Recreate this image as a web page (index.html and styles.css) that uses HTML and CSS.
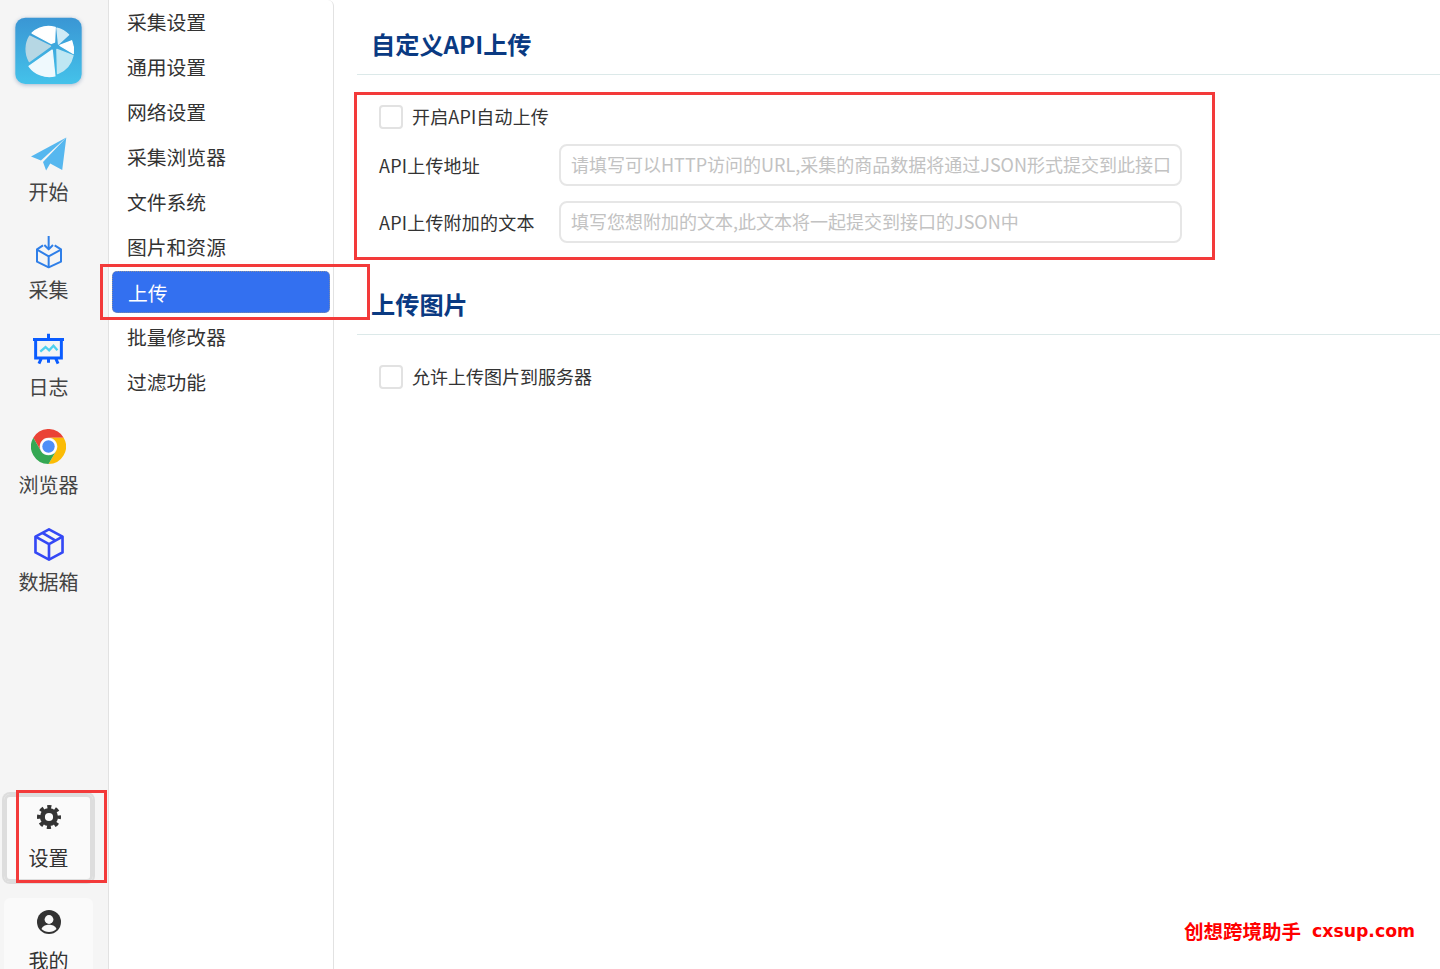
FILE: index.html
```html
<!DOCTYPE html>
<html lang="zh-CN">
<head>
<meta charset="utf-8">
<title>上传设置</title>
<link rel="stylesheet" href="styles.css">
</head>
<body>
<div class="app">
  <aside class="rail">
    <svg class="logo" viewBox="45 50 200 200" aria-hidden="true">
      <defs><linearGradient id="lg" x1="0" y1="0" x2="0" y2="1"><stop offset="0" stop-color="#3a96d4"/><stop offset="1" stop-color="#44c2ea"/></linearGradient></defs>
      <rect x="46" y="52" width="198" height="198" rx="30" fill="url(#lg)"/>
      <g stroke-width="4" stroke-linejoin="round">
        <path d="M151 137 89 107A75 75 0 0 0 88 183Z" fill="#b6d7e4" stroke="#b6d7e4"/>
        <path d="M96 98A75 75 0 0 1 165 81L163 125 153 129Z" fill="#fff" stroke="#fff"/>
        <path d="M170 83A75 75 0 0 1 205 103L175 131Z" fill="#d0ebf6" stroke="#d0ebf6"/>
        <path d="M179 135 214 121A75 75 0 0 1 219 159Z" fill="#fff" stroke="#fff"/>
        <path d="M170 147 218 165A75 75 0 0 1 172 219Z" fill="#bfe7f3" stroke="#bfe7f3"/>
        <path d="M156 149 164 226A75 75 0 0 1 87 197Z" fill="#eff9fd" stroke="#eff9fd"/>
      </g>
    </svg>
    <nav class="rail-nav">
      <a class="rail-item">
        <span class="rail-icon"><svg width="37" height="36" viewBox="90 412 108 102" aria-hidden="true"><path d="M196 415 93 470 122 482Z" fill="#56b7ef"/><path d="M196 415 128 486 137 511 149 491 184 510Z" fill="#56b7ef"/></svg></span>
        <span class="rail-label">开始</span>
      </a>
      <a class="rail-item">
        <span class="rail-icon"><svg width="28" height="34" viewBox="104 76 84 100" fill="none" stroke="#2f7fe8" stroke-width="6" stroke-linejoin="round" aria-hidden="true"><path d="M128 106 110 118V155L145 172 182 155V118L163 106"/><path d="M110 119 145 139 182 119M145 139V172M145 78V118M132 105 145 118 158 105"/></svg></span>
        <span class="rail-label">采集</span>
      </a>
      <a class="rail-item">
        <span class="rail-icon"><svg width="33" height="32" viewBox="95 372 100 96" fill="none" stroke="#0a5cff" stroke-width="9" aria-hidden="true"><path d="M98 391H192M106 391V447H184V391M145 374V391M145 447V462M124 447 116 464M166 447 174 464"/><path d="M120 428 136 414 147 424 160 410 172 424" stroke="#4dd0ef" stroke-width="7"/></svg></span>
        <span class="rail-label">日志</span>
      </a>
      <a class="rail-item">
        <span class="rail-icon"><svg width="35" height="35" viewBox="0 0 48 48" aria-hidden="true"><path d="M3.200 12A24 24 0 0 1 44.800 12H24A12 12 0 0 0 13.600 30Z" fill="#ea4335"/><path d="M44.800 12A24 24 0 0 1 24 48L34.400 30A12 12 0 0 0 24 12Z" fill="#fbbc05"/><path d="M24 48A24 24 0 0 1 3.200 12L13.600 30A12 12 0 0 0 34.400 30Z" fill="#34a853"/><circle cx="24" cy="24" r="11" fill="#fff"/><circle cx="24" cy="24" r="8.500" fill="#4f8ff7"/></svg></span>
        <span class="rail-label">浏览器</span>
      </a>
      <a class="rail-item">
        <span class="rail-icon"><svg width="30" height="33" viewBox="100 354 90 100" fill="none" stroke="#3448f5" stroke-width="8" stroke-linejoin="round" aria-hidden="true"><path d="M145 358 186 380V428L145 450 104 428V380Z"/><path d="M104 380 145 403 186 380M145 403V450M125 369 165 392"/></svg></span>
        <span class="rail-label">数据箱</span>
      </a>
    </nav>
    <a class="rail-box rail-box-active">
      <svg class="rail-box-icon" viewBox="0 0 24 24" fill="none" stroke="#333" aria-hidden="true"><circle cx="12" cy="12" r="6.600" stroke-width="5"/><circle cx="12" cy="12" r="10" stroke-width="4" stroke-dasharray="4 3.854" stroke-dashoffset="2"/></svg>
      <span class="rail-label">设置</span>
    </a>
    <a class="rail-box rail-box-user">
      <svg class="rail-box-icon" viewBox="0 0 24 24" aria-hidden="true"><circle cx="12" cy="12" r="12" fill="#333"/><circle cx="12" cy="9.500" r="4.400" fill="#fafafa"/><path d="M4.500 19C6 15.600 9 14.800 12 14.800S18 15.600 19.500 19C17.500 21 15 22 12 22S6.500 21 4.500 19Z" fill="#fafafa"/></svg>
      <span class="rail-label">我的</span>
    </a>
  </aside>

  <nav class="menu">
    <a class="menu-item">采集设置</a>
    <a class="menu-item">通用设置</a>
    <a class="menu-item">网络设置</a>
    <a class="menu-item">采集浏览器</a>
    <a class="menu-item">文件系统</a>
    <a class="menu-item">图片和资源</a>
    <a class="menu-item menu-item-active">上传</a>
    <a class="menu-item">批量修改器</a>
    <a class="menu-item">过滤功能</a>
  </nav>

  <main class="content">
    <h2 class="section-title">自定义API上传</h2>
    <div class="form">
      <label class="check-row"><input class="check" type="checkbox"><span class="check-text">开启API自动上传</span></label>
      <div class="field"><span class="field-label">API上传地址</span><input class="field-input" type="text" placeholder="请填写可以HTTP访问的URL,采集的商品数据将通过JSON形式提交到此接口"></div>
      <div class="field"><span class="field-label">API上传附加的文本</span><input class="field-input" type="text" placeholder="填写您想附加的文本,此文本将一起提交到接口的JSON中"></div>
    </div>
    <h2 class="section-title section-title-next">上传图片</h2>
    <div class="form">
      <label class="check-row"><input class="check" type="checkbox"><span class="check-text check-text-plain">允许上传图片到服务器</span></label>
    </div>
  </main>
</div>
<div class="mark mark-form"></div>
<div class="mark mark-menu"></div>
<div class="mark mark-rail"></div>
<div class="watermark"><span>创想跨境助手</span><span class="watermark-url">cxsup.com</span></div>
</body>
</html>
```
FILE: styles.css
```css
* { box-sizing: border-box; }
html, body { margin: 0; height: 100%; overflow: hidden; background: #fff; }
body {
  font-family: "Noto Sans CJK SC", "Open Sans", sans-serif;
  color: #333;
  position: relative;
}
.app { display: flex; height: 969px; overflow: hidden; }

.rail {
  width: 109px;
  flex: none;
  height: 969px;
  padding-left: 4px;
  background: #f5f5f5;
  border-right: 1px solid #e2e2e2;
  overflow: hidden;
}
.logo {
  display: block;
  width: 67px;
  height: 67px;
  margin: 17px 0 0 11px;
  filter: drop-shadow(0 1px 2px rgba(70, 110, 160, .45));
}
.rail-nav { margin-top: 53px; width: 89px; }
.rail-item { display: flex; flex-direction: column; align-items: center; height: 97.5px; }
.rail-icon { display: flex; height: 36px; align-items: center; justify-content: center; margin: -1px 0 6px; }
.rail-label { display: block; font-size: 20px; line-height: 28px; color: #444; white-space: nowrap; }

.rail-box {
  display: flex;
  flex-direction: column;
  align-items: center;
  width: 89px;
  height: 88px;
  background: #fafafa;
  border-radius: 6px;
}
.rail-box-active {
  margin-top: 169.5px;
  padding-top: 11px;
  box-shadow: 0 0 0 2px #ddd, inset 0 0 0 3px #ddd;
}
.rail-box-user { margin-top: 16px; padding-top: 12px; }
.rail-box-icon { width: 24px; height: 24px; margin-bottom: 15px; }
.rail-box .rail-label { color: #333; }
.rail-box-user .rail-box-icon { margin-bottom: 13px; }

.menu {
  width: 225px;
  flex: none;
  padding: 1px 3px 0;
  border-right: 1px solid #e2e2e2;
  border-top-right-radius: 6px;
}
.menu-item {
  display: block;
  height: 45px;
  padding-left: 15px;
  font-size: 19.8px;
  line-height: 41px;
  color: #333;
  white-space: nowrap;
}
.menu-item-active {
  height: 42px;
  margin: 0 0 3px;
  width: 218px;
  line-height: 41px;
  padding-left: 15px;
  color: #fff;
  background: #3370f0;
  border: 1px dotted #8a8f9c;
  border-radius: 5px;
}

.content { flex: 1; min-width: 0; padding-left: 23px; }
.section-title {
  margin: 0;
  padding: 29px 0 15px 14px;
  height: 75px;
  font-size: 24.2px;
  line-height: 30px;
  font-weight: 700;
  color: #0a3a82;
  border-bottom: 1px solid #dce9e9;
}
.section-title-next { margin-top: 17px; }
.form { padding: 30px 0 0 22px; width: 825px; }
.check-row { display: flex; align-items: center; height: 24px; font-size: 18px; color: #333; }
.check-text { margin-top: -2px; letter-spacing: .15px; }
.check-text-plain { letter-spacing: 0; }
.check {
  appearance: none;
  width: 24px;
  height: 24px;
  margin: 0 9px 0 0;
  background: #fff;
  border: 2px solid #e2e2e2;
  border-radius: 4px;
}
.field { display: flex; align-items: center; margin-top: 15px; }
.field-label { width: 180px; flex: none; font-size: 18px; color: #333; white-space: nowrap; letter-spacing: .2px; }
.field-input {
  width: 623px;
  height: 42px;
  padding: 0 10px 2px;
  font: inherit;
  font-size: 18px;
  background: #fff;
  border: 2px solid #e6e6e6;
  border-radius: 8px;
  outline: none;
}
.field-input::placeholder { color: #c2c2c2; opacity: 1; }

.mark { position: absolute; border: 3px solid #f33a3a; pointer-events: none; }
.mark-form { left: 354px; top: 92px; width: 861px; height: 168px; }
.mark-menu { left: 100px; top: 264px; width: 270px; height: 56px; }
.mark-rail { left: 16px; top: 790px; width: 91px; height: 93px; }

.watermark {
  position: absolute;
  left: 1184px;
  top: 917px;
  display: flex;
  align-items: center;
  gap: 11px;
  color: #ff0000;
  font-size: 19.5px;
  line-height: 28px;
  font-weight: 700;
  white-space: nowrap;
}
.watermark-url { font-family: "DejaVu Sans", sans-serif; font-size: 17.3px; }
```
